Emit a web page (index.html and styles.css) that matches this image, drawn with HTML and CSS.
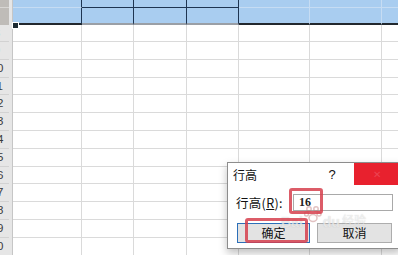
FILE: index.html
```html
<!DOCTYPE html>
<html>
<head>
    <title>行高</title>
    <link rel="stylesheet" href="styles.css">
</head>
<body>
    <div class="sheet">
        <div class="rowhead">
            <div class="rh sel top"></div>
            <div class="rh sel mid"></div>
            <div class="rh first"><span>8</span></div>
            <div class="rh"><span>9</span></div>
            <div class="rh"><span>10</span></div>
            <div class="rh"><span>11</span></div>
            <div class="rh"><span>12</span></div>
            <div class="rh"><span>13</span></div>
            <div class="rh"><span>14</span></div>
            <div class="rh"><span>15</span></div>
            <div class="rh"><span>16</span></div>
            <div class="rh"><span>17</span></div>
            <div class="rh"><span>18</span></div>
            <div class="rh"><span>19</span></div>
            <div class="rh"><span>20</span></div>
        </div>
        <div class="grid">
            <div class="row sel top">
                <div class="cell c1"></div><div class="cell c2 boxed"></div><div class="cell c3 boxed"></div><div class="cell c4 boxed"></div><div class="cell c5"></div><div class="cell c6"></div><div class="cell c7"></div>
            </div>
            <div class="row sel mid">
                <div class="cell c1"></div><div class="cell c2 boxed"></div><div class="cell c3 boxed"></div><div class="cell c4 boxed"></div><div class="cell c5"></div><div class="cell c6"></div><div class="cell c7"></div>
            </div>
            <div class="row first"><div class="cell c1"></div><div class="cell c2"></div><div class="cell c3"></div><div class="cell c4"></div><div class="cell c5"></div><div class="cell c6"></div><div class="cell c7"></div></div>
            <div class="row"><div class="cell c1"></div><div class="cell c2"></div><div class="cell c3"></div><div class="cell c4"></div><div class="cell c5"></div><div class="cell c6"></div><div class="cell c7"></div></div>
            <div class="row"><div class="cell c1"></div><div class="cell c2"></div><div class="cell c3"></div><div class="cell c4"></div><div class="cell c5"></div><div class="cell c6"></div><div class="cell c7"></div></div>
            <div class="row"><div class="cell c1"></div><div class="cell c2"></div><div class="cell c3"></div><div class="cell c4"></div><div class="cell c5"></div><div class="cell c6"></div><div class="cell c7"></div></div>
            <div class="row"><div class="cell c1"></div><div class="cell c2"></div><div class="cell c3"></div><div class="cell c4"></div><div class="cell c5"></div><div class="cell c6"></div><div class="cell c7"></div></div>
            <div class="row"><div class="cell c1"></div><div class="cell c2"></div><div class="cell c3"></div><div class="cell c4"></div><div class="cell c5"></div><div class="cell c6"></div><div class="cell c7"></div></div>
            <div class="row"><div class="cell c1"></div><div class="cell c2"></div><div class="cell c3"></div><div class="cell c4"></div><div class="cell c5"></div><div class="cell c6"></div><div class="cell c7"></div></div>
            <div class="row"><div class="cell c1"></div><div class="cell c2"></div><div class="cell c3"></div><div class="cell c4"></div><div class="cell c5"></div><div class="cell c6"></div><div class="cell c7"></div></div>
            <div class="row"><div class="cell c1"></div><div class="cell c2"></div><div class="cell c3"></div><div class="cell c4"></div><div class="cell c5"></div><div class="cell c6"></div><div class="cell c7"></div></div>
            <div class="row"><div class="cell c1"></div><div class="cell c2"></div><div class="cell c3"></div><div class="cell c4"></div><div class="cell c5"></div><div class="cell c6"></div><div class="cell c7"></div></div>
            <div class="row"><div class="cell c1"></div><div class="cell c2"></div><div class="cell c3"></div><div class="cell c4"></div><div class="cell c5"></div><div class="cell c6"></div><div class="cell c7"></div></div>
            <div class="row"><div class="cell c1"></div><div class="cell c2"></div><div class="cell c3"></div><div class="cell c4"></div><div class="cell c5"></div><div class="cell c6"></div><div class="cell c7"></div></div>
            <div class="row"><div class="cell c1"></div><div class="cell c2"></div><div class="cell c3"></div><div class="cell c4"></div><div class="cell c5"></div><div class="cell c6"></div><div class="cell c7"></div></div>
        </div>
    </div>

    <div class="handle"></div>

    <div class="dialog">
        <div class="titlebar">
            <span class="title">行高</span>
            <span class="help">?</span>
            <span class="close">&#x2715;</span>
        </div>
        <div class="field">
            <label class="field-label">行高(<u>R</u>):</label>
            <div class="input">16</div>
        </div>
        <div class="buttons">
            <div class="btn default">确定</div>
            <div class="btn">取消</div>
        </div>
    </div>

    <!-- baidu jingyan watermark over the dialog -->
    <div class="watermark">
        <span class="wm-en">Bai</span>
        <svg class="paw" width="18" height="18" viewBox="0 0 18 18">
            <g fill="none" stroke="rgba(190,120,120,0.45)" stroke-width="1.5">
                <circle cx="5" cy="4" r="2.2"/>
                <circle cx="12" cy="4" r="2.2"/>
                <circle cx="2.5" cy="9" r="2"/>
                <circle cx="15" cy="9" r="2"/>
                <ellipse cx="9" cy="13" rx="4" ry="3.5"/>
            </g>
        </svg>
        <span class="wm-en">du</span>
        <span class="wm-cn">经验</span>
    </div>
    <div class="mark mark-input"></div>
    <div class="mark mark-ok"></div>
</body>
</html>
```

FILE: styles.css
```css
body {
    margin: 0;
    width: 398px;
    height: 255px;
    overflow: hidden;
    background: #fff;
    font-family: "Noto Sans CJK SC", "Noto Sans", sans-serif;
}
.sheet {
    display: flex;
    height: 255px;
}
.rowhead {
    width: 12px;
    flex: none;
    background: #e6e6e6;
    border-right: 1px solid #c6c6c6;
    overflow: hidden;
}
.rh {
    height: 17.8px;
    box-sizing: border-box;
    border-bottom: 1px solid #d2d2d2;
    width: 24px;
    margin-left: -15px;
    text-align: center;
    font-family: "Liberation Sans", Arial, sans-serif;
    font-size: 11.5px;
    line-height: 17px;
    color: #3a3a3a;
}
.rh.sel {
    background: #bfbcb8;
    border-bottom-color: #d8d6d3;
}
.rh.top { height: 8px; }
.rh.mid { height: 17px; border-bottom: none; }
.rh.first { height: 17px; }

.grid {
    flex: 1;
    overflow: hidden;
}
.row {
    display: flex;
    height: 17.8px;
    box-sizing: border-box;
    border-bottom: 1px solid #dadada;
}
.row.first { height: 17px; }
.cell {
    flex: none;
    height: 100%;
    box-sizing: border-box;
    border-right: 1px solid #dadada;
}
.c1 { width: 69px; }
.c2 { width: 52px; }
.c3 { width: 53px; }
.c4 { width: 52px; }
.c5 { width: 71px; }
.c6 { width: 72px; }
.c7 { width: 72px; }

.row.sel {
    background: #a9cdf0;
    border-bottom: none;
}
.row.sel .cell {
    border-right-color: #c6dcf3;
}
.row.sel.top { height: 8px; }
.row.sel.top .cell { border-bottom: 1px solid #c6dcf3; }
.row.sel.mid { height: 17px; }
.row.sel.mid .cell { border-bottom: 2px solid #22282e; }
.row.sel .c1 { border-right-color: #1e3552; }
.row.sel .boxed { border-right-color: #1e3552; }
.row.sel.top .boxed { border-bottom-color: #1e3552; }
.row.sel.mid .boxed { border-bottom-color: #9a9fa6; }

.handle {
    position: absolute;
    left: 12px;
    top: 22px;
    width: 5px;
    height: 5px;
    background: #1d2b33;
    border: 1px solid #fff;
}

.dialog {
    position: absolute;
    left: 227px;
    top: 162px;
    width: 172px;
    height: 85px;
    background: #fff;
    border: 1px solid #8d8d8d;
    box-shadow: 0 4px 8px rgba(0, 0, 0, 0.25);
    font-size: 12px;
    color: #111;
}
.titlebar {
    display: flex;
    align-items: center;
    height: 22px;
}
.title {
    flex: 1;
    padding-left: 5px;
}
.help {
    width: 22px;
    text-align: center;
    margin-right: 11px;
    font-family: "Liberation Sans", Arial, sans-serif;
    font-size: 13px;
}
.close {
    align-self: stretch;
    width: 46px;
    background: #e8212e;
    color: #ec4452;
    font-size: 10px;
    line-height: 22px;
    text-align: center;
}
.field {
    display: flex;
    align-items: center;
    margin-top: 8px;
    padding-left: 8px;
}
.field-label {
    width: 57px;
    font-size: 12.5px;
    letter-spacing: 0.3px;
}
.field-label u { text-decoration: underline; }
.input {
    width: 100px;
    height: 17px;
    box-sizing: border-box;
    border: 1px solid #a9a9a9;
    padding-left: 5px;
    font-family: "Liberation Serif", "Times New Roman", serif;
    font-size: 12px;
    font-weight: bold;
    line-height: 15px;
    color: #222;
}
.buttons {
    display: flex;
    gap: 7px;
    margin-top: 11px;
    padding-left: 9px;
}
.btn {
    width: 75px;
    height: 20px;
    box-sizing: border-box;
    border: 1px solid #adadad;
    background: #e3e3e3;
    text-align: center;
    line-height: 18px;
    font-size: 12px;
}
.btn.default {
    width: 73px;
    border-color: #2c6fb8;
}

.watermark {
    position: absolute;
    left: 281px;
    top: 205px;
    display: flex;
    align-items: flex-end;
    pointer-events: none;
}
.wm-en {
    font-family: "Liberation Sans", Arial, sans-serif;
    font-size: 14px;
    font-weight: bold;
    line-height: 18px;
    color: rgba(255, 255, 255, 0.6);
    text-shadow: 0 0 1px rgba(140, 140, 140, 0.45);
}
.paw { margin: 0 1px 8px; }
.wm-cn {
    font-family: "Noto Sans CJK SC", sans-serif;
    font-size: 12px;
    line-height: 14px;
    margin: 0 0 4px 2px;
    color: rgba(255, 255, 255, 0.6);
    text-shadow: 0 0 1px rgba(140, 140, 140, 0.45);
}

.mark {
    position: absolute;
    box-sizing: border-box;
    border: 3px solid rgba(214, 64, 78, 0.85);
    border-radius: 3px;
}
.mark-input {
    left: 289px;
    top: 188px;
    width: 34px;
    height: 26px;
}
.mark-ok {
    left: 245px;
    top: 218px;
    width: 63px;
    height: 25px;
}
```
